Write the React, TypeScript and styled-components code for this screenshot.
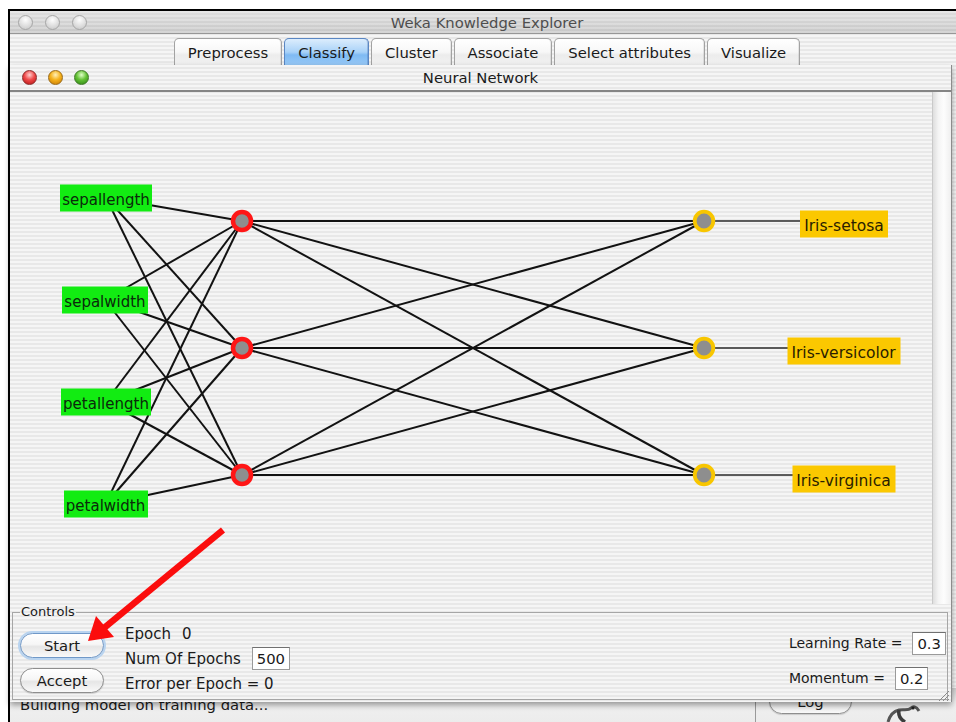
import React from "react";
import styled, { createGlobalStyle } from "styled-components";

const GlobalStyle = createGlobalStyle`
  html, body {
    margin: 0;
    padding: 0;
    background: #fff;
  }
  body {
    font-family: "DejaVu Sans", "Noto Sans", sans-serif;
    color: #1a1a1a;
  }
`;

const pinstripe = `repeating-linear-gradient(to bottom, #f5f5f5 0px, #f5f5f5 2px, #e8e8e8 2px, #e8e8e8 4px)`;

// page coordinates of the diagram, the canvas starts at (10, 92)
const OX = 10;
const OY = 92;

const inputs = [
  { name: "sepallength", x: 106, y: 197.5, w: 92 },
  { name: "sepalwidth", x: 105, y: 300, w: 86 },
  { name: "petallength", x: 106, y: 401.5, w: 90 },
  { name: "petalwidth", x: 105.5, y: 504, w: 84 },
];

const hidden = [
  { x: 242, y: 221 },
  { x: 242, y: 348 },
  { x: 242, y: 475 },
];

const outputs = [
  { x: 704, y: 221 },
  { x: 704, y: 348 },
  { x: 704, y: 475 },
];

const classes = [
  { name: "Iris-setosa", x: 844, y: 223.5, w: 88 },
  { name: "Iris-versicolor", x: 843.5, y: 351, w: 113 },
  { name: "Iris-virginica", x: 843.5, y: 478.5, w: 103 },
];

const tabs = ["Preprocess", "Classify", "Cluster", "Associate", "Select attributes", "Visualize"];

const App: React.FC = () => {
  return (
    <>
      <GlobalStyle />
      <Desktop>
        <OuterWindow>
          <TitleBar>
            <Lights $pad={8} $gap={12}>
              <Light $kind="off" />
              <Light $kind="off" />
              <Light $kind="off" />
            </Lights>
            <TitleText $dim>Weka Knowledge Explorer</TitleText>
            <span />
          </TitleBar>
          <TabStrip>
            {tabs.map((t) => (
              <Tab key={t} $active={t === "Classify"}>
                {t}
              </Tab>
            ))}
          </TabStrip>
          <OuterBody />
          <StatusBar>
            <StatusText>Building model on training data...</StatusText>
            <StatusSide>
              <PillButton as="div" $w={83}>
                Log
              </PillButton>
              <svg width="38" height="34" viewBox="0 0 38 34">
                <path d="M2 33 C 4 26, 8 22, 13 21 C 18 20, 22 22, 25 19 C 27 17, 30 17, 33 22" stroke="#555" strokeWidth="3" fill="none" />
                <path d="M13 21 C 12 26, 14 30, 19 33" stroke="#3c3c3c" strokeWidth="3.5" fill="none" />
                <circle cx="27" cy="19" r="1.6" fill="#222" />
              </svg>
            </StatusSide>
          </StatusBar>
        </OuterWindow>

        <InnerWindow>
          <InnerTitle>
            <Lights $pad={12} $gap={11}>
              <Light $kind="red" />
              <Light $kind="yellow" />
              <Light $kind="green" />
            </Lights>
            <TitleText>Neural Network</TitleText>
            <span />
          </InnerTitle>

          <CanvasRow>
            <Canvas>
              <svg width="923" height="512" style={{ position: "absolute", left: 0, top: 0 }}>
                <g stroke="#121212" strokeWidth="2">
                  {inputs.map((a) =>
                    hidden.map((h, j) => (
                      <line key={a.name + j} x1={a.x - OX} y1={a.y - OY} x2={h.x - OX} y2={h.y - OY} />
                    ))
                  )}
                  {hidden.map((h, i) =>
                    outputs.map((o, j) => (
                      <line key={`h${i}${j}`} x1={h.x - OX} y1={h.y - OY} x2={o.x - OX} y2={o.y - OY} />
                    ))
                  )}
                </g>
                <g stroke="#2a2a2a" strokeWidth="1.6">
                  {outputs.map((o, i) => (
                    <line key={`c${i}`} x1={o.x - OX} y1={o.y - OY} x2={classes[i].x - OX} y2={o.y - OY} />
                  ))}
                </g>
                {hidden.map((h, i) => (
                  <circle key={`hn${i}`} cx={h.x - OX} cy={h.y - OY} r="9" fill="#8e8e8e" stroke="#ff1616" strokeWidth="4.5" />
                ))}
                {outputs.map((o, i) => (
                  <circle key={`on${i}`} cx={o.x - OX} cy={o.y - OY} r="9.3" fill="#8e8e8e" stroke="#f8c600" strokeWidth="3.8" />
                ))}
              </svg>
              {inputs.map((a) => (
                <NodeLabel key={a.name} $kind="input" style={{ left: a.x - OX, top: a.y - OY, width: a.w }}>
                  {a.name}
                </NodeLabel>
              ))}
              {classes.map((c) => (
                <NodeLabel key={c.name} $kind="output" style={{ left: c.x - OX, top: c.y - OY, width: c.w }}>
                  {c.name}
                </NodeLabel>
              ))}
            </Canvas>
            <ScrollTrack />
          </CanvasRow>

          <Controls>
            <Group>
              <GroupTitle>Controls</GroupTitle>
              <ButtonColumn>
                <PillButton $default $w={84}>Start</PillButton>
                <PillButton $w={84}>Accept</PillButton>
              </ButtonColumn>
              <InfoColumn>
                <Row $gap={11}>
                  <span>Epoch</span>
                  <span>0</span>
                </Row>
                <Row $gap={11}>
                  <span>Num Of Epochs</span>
                  <Field>500</Field>
                </Row>
                <Row>
                  <span>Error per Epoch = 0</span>
                </Row>
              </InfoColumn>
              <ParamColumn>
                <Row $gap={10}>
                  <span>Learning Rate =</span>
                  <Field>0.3</Field>
                </Row>
                <Row $gap={10}>
                  <span>Momentum =</span>
                  <Field>0.2</Field>
                </Row>
              </ParamColumn>
            </Group>
          </Controls>

          <Grip width="13" height="13" viewBox="0 0 13 13">
            <g stroke="#8a8a8a" strokeWidth="1">
              <line x1="12" y1="2" x2="2" y2="12" />
              <line x1="12" y1="6" x2="6" y2="12" />
              <line x1="12" y1="10" x2="10" y2="12" />
            </g>
          </Grip>
        </InnerWindow>

        <ArrowLayer width="956" height="722" viewBox="0 0 956 722">
          <line x1="223" y1="530" x2="104" y2="628" stroke="#fb0d0d" strokeWidth="6.5" />
          <polygon points="88,641 96,616 114,637" fill="#fb0d0d" />
        </ArrowLayer>
      </Desktop>
    </>
  );
};

export default App;

const Desktop = styled.div`
  position: relative;
  width: 956px;
  height: 722px;
  overflow: hidden;
  background: #fff;
`;

const OuterWindow = styled.div`
  position: absolute;
  left: 8px;
  top: 9px;
  width: 956px;
  height: 713px;
  box-sizing: border-box;
  border-top: 2px solid #000;
  border-left: 2px solid #000;
  display: flex;
  flex-direction: column;
  background: ${pinstripe};
`;

const TitleBar = styled.div`
  height: 23px;
  flex: none;
  box-sizing: border-box;
  display: grid;
  grid-template-columns: 1fr auto 1fr;
  align-items: center;
  border-bottom: 1px solid #979797;
  background: repeating-linear-gradient(to bottom, rgba(255, 255, 255, 0.18) 0 2px, rgba(0, 0, 0, 0.02) 2px 4px),
    linear-gradient(to bottom, #e2e2e2, #cbcbcb);
`;

const InnerTitle = styled.div`
  height: 27px;
  flex: none;
  box-sizing: border-box;
  display: grid;
  grid-template-columns: 1fr auto 1fr;
  align-items: center;
  border-bottom: 2px solid #858585;
  background: ${pinstripe};
`;

const Lights = styled.div<{ $pad: number; $gap: number }>`
  display: flex;
  gap: ${(p) => p.$gap}px;
  padding-left: ${(p) => p.$pad}px;
`;

const lightColors: Record<string, [string, string, string, string]> = {
  off: ["#fdfdfd", "#e4e4e4", "#c4c4c4", "#a6a6a6"],
  red: ["#ffd0d0", "#ef4a4a", "#b41212", "#8c2a2a"],
  yellow: ["#fff0b8", "#f6b21c", "#c47600", "#9a6a18"],
  green: ["#e0ffc8", "#64c236", "#2c8212", "#3e7a26"],
};

const Light = styled.span<{ $kind: string }>`
  width: 15px;
  height: 15px;
  border-radius: 50%;
  box-sizing: border-box;
  border: 1px solid ${(p) => lightColors[p.$kind][3]};
  background: radial-gradient(
    circle at 50% 30%,
    ${(p) => lightColors[p.$kind][0]} 0,
    ${(p) => lightColors[p.$kind][1]} 45%,
    ${(p) => lightColors[p.$kind][2]} 100%
  );
`;

const TitleText = styled.div<{ $dim?: boolean }>`
  font-size: 14.8px;
  color: ${(p) => (p.$dim ? "#4e4e4e" : "#1a1a1a")};
  white-space: nowrap;
`;

const TabStrip = styled.div`
  height: 31px;
  flex: none;
  box-sizing: border-box;
  padding-top: 4px;
  display: flex;
  justify-content: center;
  gap: 2px;
  overflow: hidden;
`;

const Tab = styled.div<{ $active?: boolean }>`
  height: 30px;
  box-sizing: border-box;
  padding: 0 13px 2px;
  display: flex;
  align-items: center;
  font-size: 14.8px;
  color: #1a1a1a;
  white-space: nowrap;
  border: 1px solid ${(p) => (p.$active ? "#5a86c2" : "#a2a2a2")};
  border-bottom: none;
  border-radius: 5px 5px 0 0;
  box-shadow: inset -1px 0 0 ${(p) => (p.$active ? "rgba(40,80,150,0.25)" : "rgba(0,0,0,0.08)")};
  background: ${(p) =>
    p.$active
      ? "linear-gradient(to bottom, #dcedfd 0%, #a9d2f8 45%, #7fbaf3 55%, #9fcdf7 100%)"
      : "linear-gradient(to bottom, #ffffff 0%, #f7f7f7 45%, #ececec 55%, #f3f3f3 100%)"};
`;

const OuterBody = styled.div`
  flex: 1;
`;

const StatusBar = styled.div`
  height: 34px;
  flex: none;
  display: flex;
  background: linear-gradient(to bottom, #cfcfcf, #f0f0f0 40%, #ececec);
`;

const StatusText = styled.div`
  width: 746px;
  box-sizing: border-box;
  padding: 8px 0 0 10px;
  line-height: 17px;
  font-size: 14.8px;
  border-right: 1px solid #9a9a9a;
  white-space: nowrap;
`;

const StatusSide = styled.div`
  display: flex;
  align-items: flex-start;
  gap: 34px;
  padding: 1px 0 0 13px;
`;

const InnerWindow = styled.div`
  position: absolute;
  left: 10px;
  top: 65px;
  width: 942px;
  height: 637px;
  box-sizing: border-box;
  display: flex;
  flex-direction: column;
  background: ${pinstripe};
  border-right: 1px solid #8c8c8c;
  box-shadow: 0 3px 6px rgba(0, 0, 0, 0.38);
`;

const CanvasRow = styled.div`
  height: 512px;
  flex: none;
  display: flex;
`;

const Canvas = styled.div`
  position: relative;
  flex: 1;
  overflow: hidden;
`;

const ScrollTrack = styled.div`
  width: 19px;
  flex: none;
  box-sizing: border-box;
  border-left: 1px solid #c9c9c9;
  background: linear-gradient(to right, #dedede 0%, #f4f4f4 30%, #fdfdfd 60%, #efefef 100%);
`;

const NodeLabel = styled.div<{ $kind: "input" | "output" }>`
  position: absolute;
  transform: translate(-50%, -50%);
  height: 27px;
  box-sizing: border-box;
  padding-top: 4px;
  line-height: 22px;
  text-align: center;
  white-space: nowrap;
  font-size: ${(p) => (p.$kind === "input" ? "15px" : "15.5px")};
  color: ${(p) => (p.$kind === "input" ? "#0b2a0b" : "#2a1e00")};
  background: ${(p) => (p.$kind === "input" ? "#12ec12" : "#fbc800")};
`;

const Controls = styled.div`
  flex: 1;
  box-sizing: border-box;
  padding: 1px 3px 2px 2px;
  display: flex;
`;

const Group = styled.fieldset`
  flex: 1;
  margin: 0;
  min-width: 0;
  box-sizing: border-box;
  padding: 0 1px 0 7px;
  border: 1px solid #a6a6a6;
  display: flex;
  align-items: flex-start;
  font-size: 15px;
`;

const GroupTitle = styled.legend`
  padding: 0 1px;
  font-size: 13px;
  line-height: 14px;
  color: #1a1a1a;
`;

const ButtonColumn = styled.div`
  display: flex;
  flex-direction: column;
  gap: 10px;
  padding-top: 14px;
`;

const PillButton = styled.button<{ $default?: boolean; $w: number }>`
  width: ${(p) => p.$w}px;
  height: 25px;
  box-sizing: border-box;
  border-radius: 13px;
  font-family: inherit;
  font-size: 14.8px;
  color: #1a1a1a;
  display: flex;
  align-items: center;
  justify-content: center;
  padding: 0;
  border: 1px solid ${(p) => (p.$default ? "#6f98c8" : "#8e8e8e")};
  box-shadow: ${(p) => (p.$default ? "0 0 0 2px #b9d4f0, 0 1px 2px rgba(0,0,0,0.2)" : "0 1px 1px rgba(0,0,0,0.15)")};
  background: linear-gradient(to bottom, #ffffff 0%, #f6f6f6 45%, #e6e6e6 55%, #f9f9f9 100%);
`;

const InfoColumn = styled.div`
  display: grid;
  grid-template-rows: 23px 27px 23px;
  align-items: center;
  margin-left: 21px;
  padding-top: 3px;
`;

const ParamColumn = styled.div`
  display: grid;
  grid-template-rows: 24px 24px;
  row-gap: 11px;
  align-items: center;
  margin-left: auto;
  padding-top: 12px;
  font-size: 14px;
`;

const Row = styled.div<{ $gap?: number }>`
  display: flex;
  align-items: center;
  gap: ${(p) => p.$gap ?? 0}px;
  white-space: nowrap;
`;

const Field = styled.span`
  height: 23px;
  box-sizing: border-box;
  padding: 0 4px;
  display: inline-flex;
  align-items: center;
  font-size: 14.8px;
  background: #fff;
  border: 1px solid #9a9a9a;
  border-top-color: #707070;
`;

const Grip = styled.svg`
  position: absolute;
  right: 1px;
  bottom: 0;
`;

const ArrowLayer = styled.svg`
  position: absolute;
  left: 0;
  top: 0;
  pointer-events: none;
`;
